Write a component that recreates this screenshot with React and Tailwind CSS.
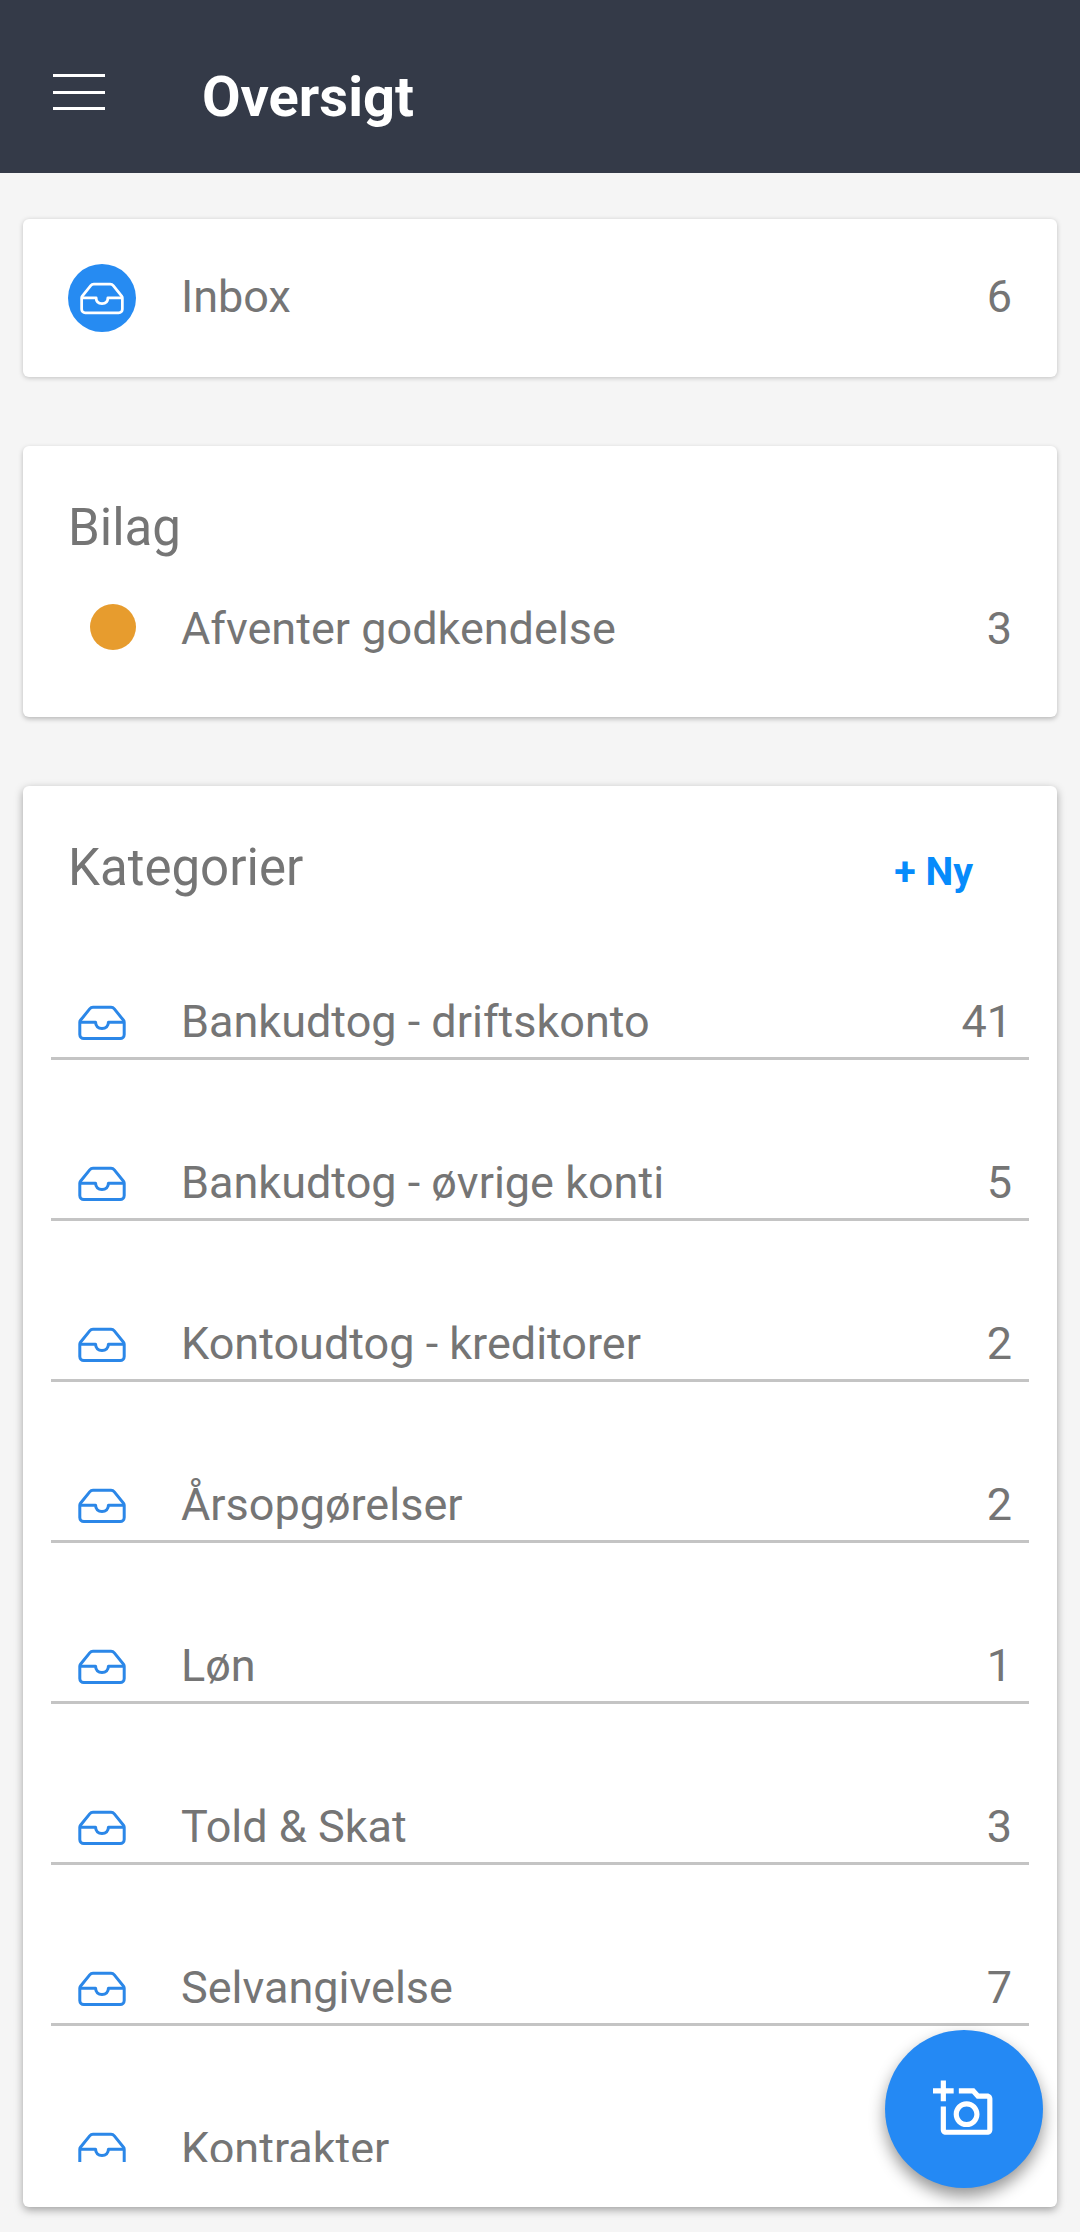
import React from 'react';

const categories = [
  { name: 'Bankudtog - driftskonto', count: 41 },
  { name: 'Bankudtog - øvrige konti', count: 5 },
  { name: 'Kontoudtog - kreditorer', count: 2 },
  { name: 'Årsopgørelser', count: 2 },
  { name: 'Løn', count: 1 },
  { name: 'Told & Skat', count: 3 },
  { name: 'Selvangivelse', count: 7 },
  { name: 'Kontrakter', count: '' },
];

const InboxIcon = ({ className }) => (
  <svg viewBox="0 0 48 36" fill="none" stroke="currentColor" strokeWidth="3" strokeLinejoin="round" className={className}>
    <path d="M1.8 17.3V29.6a4 4 0 0 0 4 4H42.2a4 4 0 0 0 4-4V17.3a3 3 0 0 0-.7-2L36.3 3.9a4.4 4.4 0 0 0-3.3-1.6H15a4.4 4.4 0 0 0-3.3 1.6L2.5 15.3a3 3 0 0 0-.7 2z" />
    <path d="M1.8 17.3H17.6c0 4 2.6 6.3 6.4 6.3s6.4-2.3 6.4-6.3H46.2" />
  </svg>
);

const AddPhotoIcon = () => (
  <svg viewBox="0 0 24 24" fill="currentColor" className="size-[62px]">
    <path d="M21 6h-3.17L16 4h-6v2h5.12l1.83 2H21v12H5v-9H3v9c0 1.1.9 2 2 2h16c1.1 0 2-.9 2-2V8c0-1.1-.9-2-2-2zM8 14c0 2.76 2.24 5 5 5s5-2.24 5-5-2.24-5-5-5-5 2.24-5 5zm5-3c1.65 0 3 1.35 3 3s-1.35 3-3 3-3-1.35-3-3 1.35-3 3-3zM5 6h3V4H5V1H3v3H0v2h3v3h2V6z" />
  </svg>
);

const Header = () => (
  <header className="flex h-[173px] shrink-0 items-start bg-[#343a48] pl-[53px] text-white">
    <button className="mt-[74px] flex w-[52px] flex-col gap-[13.5px]">
      <span className="h-[3px] w-full bg-white" />
      <span className="h-[3px] w-full bg-white" />
      <span className="h-[3px] w-full bg-white" />
    </button>
    <h1 className="mt-[65px] ml-[97px] text-[56px] leading-[64px] font-bold">Oversigt</h1>
  </header>
);

const CategoryRow = ({ name, count }) => (
  <li className="flex h-[161px] items-end border-b-[3px] border-[#c4c4c4] pr-[17px] pb-[3px]">
    <InboxIcon className="mb-[13px] ml-[27px] h-9 w-12 text-[#2b87e8]" />
    <span className="ml-[55px] flex-1 leading-[64px]">{name}</span>
    <span className="leading-[64px]">{count}</span>
  </li>
);

const App = () => {
  return (
    <div className="relative flex h-[2232px] w-[1080px] flex-col overflow-hidden bg-[#f5f5f5] font-['Roboto',sans-serif] text-[45px] text-[#757575]">
      <Header />
      <main className="mt-[46px] flex flex-col px-[23px]">
        <section className="flex h-[158px] items-center rounded-[6px] bg-white pr-[45px] pl-[45px] shadow-[0_1px_5px_rgba(0,0,0,0.22)]">
          <div className="flex size-[68px] items-center justify-center rounded-full bg-[#268bf2] text-white">
            <InboxIcon className="h-[33px] w-11" />
          </div>
          <span className="ml-[45px] flex-1 leading-[64px] -mt-0.5">Inbox</span>
          <span className="leading-[64px] -mt-0.5">6</span>
        </section>

        <section className="mt-[69px] h-[271px] rounded-[6px] bg-white px-[45px] pt-[52px] shadow-[0_2px_5px_rgba(0,0,0,0.25)]">
          <h2 className="text-[51px] leading-[60px]">Bilag</h2>
          <div className="mt-[41px] flex items-center leading-[60px]">
            <span className="-mt-[4px] ml-[22px] size-[46px] rounded-full bg-[#e79c2e]" />
            <span className="ml-[45px] flex-1">Afventer godkendelse</span>
            <span>3</span>
          </div>
        </section>

        <section className="mt-[69px] h-[1421px] rounded-[6px] bg-white px-7 pt-[52px] shadow-[0_3px_9px_rgba(0,0,0,0.35)]">
          <div className="flex items-center justify-between pr-[56px] pl-[17px]">
            <h2 className="text-[51px] leading-[60px]">Kategorier</h2>
            <button className="mt-[7px] text-[39.375px] leading-[50px] font-bold text-[#068bfb]">+ Ny</button>
          </div>
          <ul className="mt-px h-[1263px] overflow-hidden">
            {categories.map((category) => (
              <CategoryRow key={category.name} name={category.name} count={category.count} />
            ))}
          </ul>
        </section>
      </main>

      <button className="absolute right-[37px] bottom-11 flex size-[158px] items-center justify-center rounded-full bg-[#2489f4] text-white shadow-[0_8px_16px_rgba(0,0,0,0.42)]">
        <AddPhotoIcon />
      </button>
    </div>
  );
};

export default App;
